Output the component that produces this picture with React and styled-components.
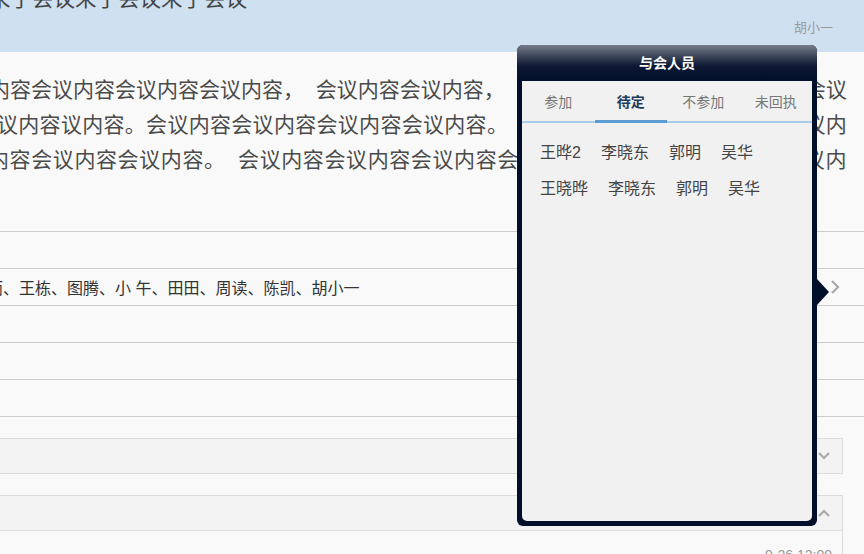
import React from "react";
import styled, { createGlobalStyle } from "styled-components";

const GlobalStyle = createGlobalStyle`
  html, body {
    margin: 0;
    padding: 0;
    background: #f9f9f9;
  }
  body {
    font-family: "Liberation Sans", "Noto Sans CJK SC", sans-serif;
  }
`;

const Page = styled.div`
  position: relative;
  width: 864px;
  height: 554px;
  overflow: hidden;
  background: #f9f9f9;
`;

const Header = styled.header`
  height: 52px;
  background: #cfe0f1;
  padding-right: 31px;
  overflow: hidden;
`;

const Title = styled.h1`
  margin: -16px 0 0 -11px;
  font-size: 21.5px;
  font-weight: normal;
  line-height: 30px;
  color: #444;
  white-space: nowrap;
`;

const Author = styled.div`
  margin-top: 6px;
  text-align: right;
  font-size: 13px;
  line-height: 16px;
  color: #999;
`;

const Article = styled.div`
  padding: 20px 17px 54px 0;
  font-size: 21px;
  line-height: 35px;
  color: #4a4a4a;
  word-spacing: 6px;
`;

const Line = styled.div`
  display: flex;
  justify-content: space-between;
  white-space: nowrap;
  margin-left: ${(p) => p.$indent}px;
  letter-spacing: ${(p) => p.$spacing || 0}px;
`;

const InfoList = styled.div`
  border-top: 1px solid #cccccc;
`;

const InfoRow = styled.div`
  height: 36px;
  border-bottom: 1px solid #cccccc;
  display: flex;
  align-items: center;
  padding-right: 24px;
  font-size: 16px;
  color: #333;
`;

const Names = styled.span`
  flex: 1;
  margin-left: -29px;
  white-space: nowrap;
`;

const Sections = styled.div`
  padding: 21px 21px 0 0;
`;

const Box = styled.section`
  margin: 0 0 21px -2px;
  border: 1px solid #dcdcdc;
  background: #f9f9f9;
`;

const BoxHead = styled.div`
  height: 34px;
  background: #f3f3f3;
  display: flex;
  align-items: center;
  justify-content: flex-end;
  padding-right: 12px;
  border-bottom: ${(p) => (p.$open ? "1px solid #dcdcdc" : "none")};
`;

const BoxBody = styled.div`
  padding: 15px 10px 20px;
  text-align: right;
  font-size: 14px;
  line-height: 18px;
  color: #999;
`;

const Popup = styled.div`
  position: absolute;
  left: 517px;
  top: 45px;
  width: 300px;
  height: 481px;
  box-sizing: border-box;
  display: flex;
  flex-direction: column;
  padding: 0 5px 5px;
  border-radius: 6px;
  background: #020f2a;
`;

const PopupHead = styled.div`
  height: 36px;
  margin: 0 -5px;
  border-radius: 6px 6px 0 0;
  background: linear-gradient(#767d8c 0%, #3e475a 30%, #0d1934 58%, #020f2a 100%);
  color: #fff;
  font-size: 14px;
  font-weight: bold;
  line-height: 36px;
  text-align: center;
`;

const Pointer = styled.div`
  position: absolute;
  right: -12px;
  top: 234px;
  width: 0;
  height: 0;
  border-top: 13px solid transparent;
  border-bottom: 13px solid transparent;
  border-left: 12px solid #020f2a;
`;

const Panel = styled.div`
  flex: 1;
  background: #f1f1f1;
  border-radius: 0 0 5px 5px;
`;

const TabBar = styled.div`
  display: flex;
  border-bottom: 2px solid #a8cbe9;
`;

const Tab = styled.div`
  position: relative;
  flex: 1;
  height: 40px;
  line-height: 42px;
  text-align: center;
  font-size: 14px;
  color: ${(p) => (p.$active ? "#1d3b5b" : "#777")};
  font-weight: ${(p) => (p.$active ? "bold" : "normal")};

  &::after {
    content: "";
    display: ${(p) => (p.$active ? "block" : "none")};
    position: absolute;
    left: 0;
    right: 0;
    bottom: -2px;
    height: 3px;
    background: #5e9cd4;
  }
`;

const NameList = styled.div`
  padding: 12px 0 0 18px;
`;

const NameRow = styled.div`
  display: flex;
  gap: 20px;
  line-height: 36px;
  font-size: 16px;
  color: #444;
`;

const Chevron = ({ dir }) => {
  const pts = {
    right: "1,1 7,7 1,13",
    down: "1,1 6,6 11,1",
    up: "1,7 6,2 11,7",
  }[dir];
  const size = dir === "right" ? [9, 14] : [12, 8];
  return (
    <svg width={size[0]} height={size[1]} viewBox={`0 0 ${size[0]} ${size[1]}`}>
      <polyline points={pts} fill="none" stroke="#aaa" strokeWidth="2.2" />
    </svg>
  );
};

// the paragraph runs on behind the popup; only the visible ends are kept
const lines = [
  { indent: -11, spacing: 0, lead: "内容会议内容会议内容会议内容， 会议内容会议内容， 会", tail: "会议" },
  { indent: -3, spacing: 0.3, lead: "议内容议内容。会议内容会议内容会议内容会议内容。", tail: "议内" },
  { indent: -12, spacing: 0.6, lead: "内容会议内容会议内容。 会议内容会议内容会议内容会", tail: "议内" },
];

const tabs = ["参加", "待定", "不参加", "未回执"];
const people = [
  ["王晔2", "李晓东", "郭明", "吴华"],
  ["王晓晔", "李晓东", "郭明", "吴华"],
];

export default function App() {
  return (
    <Page>
      <GlobalStyle />
      <Header>
        <Title>来了会议来了会议来了会议</Title>
        <Author>胡小一</Author>
      </Header>

      <Article>
        {lines.map((l, i) => (
          <Line key={i} $indent={l.indent} $spacing={l.spacing}>
            <span>{l.lead}</span>
            <span>{l.tail}</span>
          </Line>
        ))}
      </Article>

      <InfoList>
        <InfoRow />
        <InfoRow>
          <Names>王雨、王栋、图腾、小 午、田田、周读、陈凯、胡小一</Names>
          <Chevron dir="right" />
        </InfoRow>
        <InfoRow />
        <InfoRow />
        <InfoRow />
      </InfoList>

      <Sections>
        <Box>
          <BoxHead>
            <Chevron dir="down" />
          </BoxHead>
        </Box>
        <Box>
          <BoxHead $open>
            <Chevron dir="up" />
          </BoxHead>
          <BoxBody>9-26 12:00</BoxBody>
        </Box>
      </Sections>

      <Popup>
        <PopupHead>与会人员</PopupHead>
        <Panel>
          <TabBar>
            {tabs.map((t) => (
              <Tab key={t} $active={t === "待定"}>
                {t}
              </Tab>
            ))}
          </TabBar>
          <NameList>
            {people.map((row, i) => (
              <NameRow key={i}>
                {row.map((n, j) => (
                  <span key={j}>{n}</span>
                ))}
              </NameRow>
            ))}
          </NameList>
        </Panel>
        <Pointer />
      </Popup>
    </Page>
  );
}
